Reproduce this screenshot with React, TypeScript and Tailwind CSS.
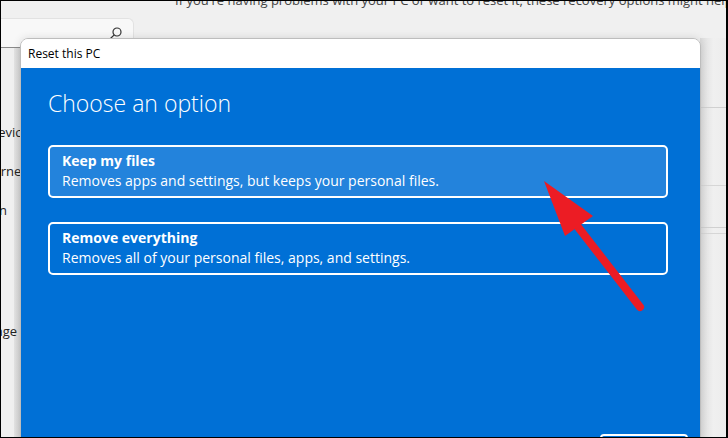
import React from 'react';

const font = { fontFamily: '"Open Sans", "Noto Sans", sans-serif' };

const navItems = [
  { label: 'Bluetooth & devices', cls: 'mt-[122px] w-[34px]' },
  { label: 'Network & internet', cls: 'mt-[21px] w-[25px]' },
  { label: 'Personalization', cls: 'mt-[21px] w-[6px]' },
  { label: 'Time & language', cls: 'mt-[103px] w-[16px]' },
];

function OptionCard({ title, desc, active }: { title: string; desc: string; active?: boolean }) {
  return (
    <div
      className={`rounded-[5px] border-2 border-white px-3 pt-[4px] pb-[5px] ${active ? 'bg-[#2383dc]' : 'bg-[#0070d6]'}`}
    >
      <div className="text-[14px] font-bold leading-[20px] text-white">{title}</div>
      <div className="text-[14px] leading-[20px] text-white">{desc}</div>
    </div>
  );
}

export default function App() {
  return (
    <div className="relative h-[438px] w-[728px] overflow-hidden border border-black bg-[#f0f0f0]" style={font}>
      {/* settings page behind */}
      <div className="absolute left-[174px] top-[-10px] whitespace-nowrap text-[13px] text-[#444]">
        If you're having problems with your PC or want to reset it, these recovery options might help.
      </div>
      <div className="absolute left-[-10px] top-[17px] flex h-[30px] w-[143px] items-center justify-end rounded-tr-[6px] border border-[#e2e2e2] border-b-[#8a8a8a] bg-[#f8f8f8] pr-[10px]">
        <svg width="14" height="14" viewBox="0 0 14 14" fill="none" stroke="#333" strokeWidth="1.2">
          <circle cx="8" cy="6" r="4" />
          <path d="M5.2 8.8 1.5 12.5" />
        </svg>
      </div>
      <div className="absolute left-0 top-0 flex h-full w-[20px] flex-col overflow-hidden">
        <div className="absolute right-0 top-[47px] h-full w-[7px] bg-gradient-to-r from-[#e4e4e4] to-[#cfcfcf]" />
        {navItems.map((n) => (
          <div key={n.label} className={`${n.cls} relative flex shrink-0 justify-end whitespace-nowrap text-[13px] leading-[18px] text-[#222]`}>
            <span className="shrink-0">{n.label}</span>
          </div>
        ))}
      </div>
      <div className="absolute right-0 top-[37px] flex h-full w-[27px] flex-col bg-gradient-to-r from-[#dcdcdc] via-[#f0f0f0] to-[#ececec]">
        <div className="h-[70px] border-b border-[#d0d0d0]" />
        <div className="h-[78px] border-b border-[#d6d6d6]" />
        <div className="h-[42px] border-b border-[#d0d0d0]" />
        <div className="h-[6px] border-b border-[#d6d6d6]" />
      </div>
      <div className="absolute right-0 top-0 h-full w-px bg-black" />

      {/* dialog */}
      <div className="absolute left-[19px] top-[37px] flex h-[402px] w-[681px] flex-col overflow-hidden rounded-t-[8px] border border-[#bdbdbd] shadow-[0_0_8px_rgba(0,0,0,0.12)]">
        <div className="flex h-[29px] shrink-0 items-center bg-white pl-[7px] text-[12px] text-black">Reset this PC</div>
        <div className="flex flex-1 flex-col bg-[#0070d6] pl-[27px] pr-[32px] pt-[19px]">
          <div className="text-[23px] font-light leading-[32px] text-white">Choose an option</div>
          <div className="mt-[26px] flex flex-col gap-[24px]">
            <OptionCard active title="Keep my files" desc="Removes apps and settings, but keeps your personal files." />
            <OptionCard title="Remove everything" desc="Removes all of your personal files, apps, and settings." />
          </div>
          <div className="ml-auto mr-[-20px] mt-auto mb-[-11px] h-[16px] w-[88px] shrink-0 rounded-[4px] border-2 border-white" />
        </div>
      </div>

      {/* red arrow annotation */}
      <svg className="absolute left-0 top-0" width="728" height="438" viewBox="0 0 728 438">
        <path d="M577 226 L639 306" stroke="#ec1c24" strokeWidth="8" strokeLinecap="round" />
        <polygon points="543,180 592,215 564,235" fill="#ec1c24" />
      </svg>
    </div>
  );
}
